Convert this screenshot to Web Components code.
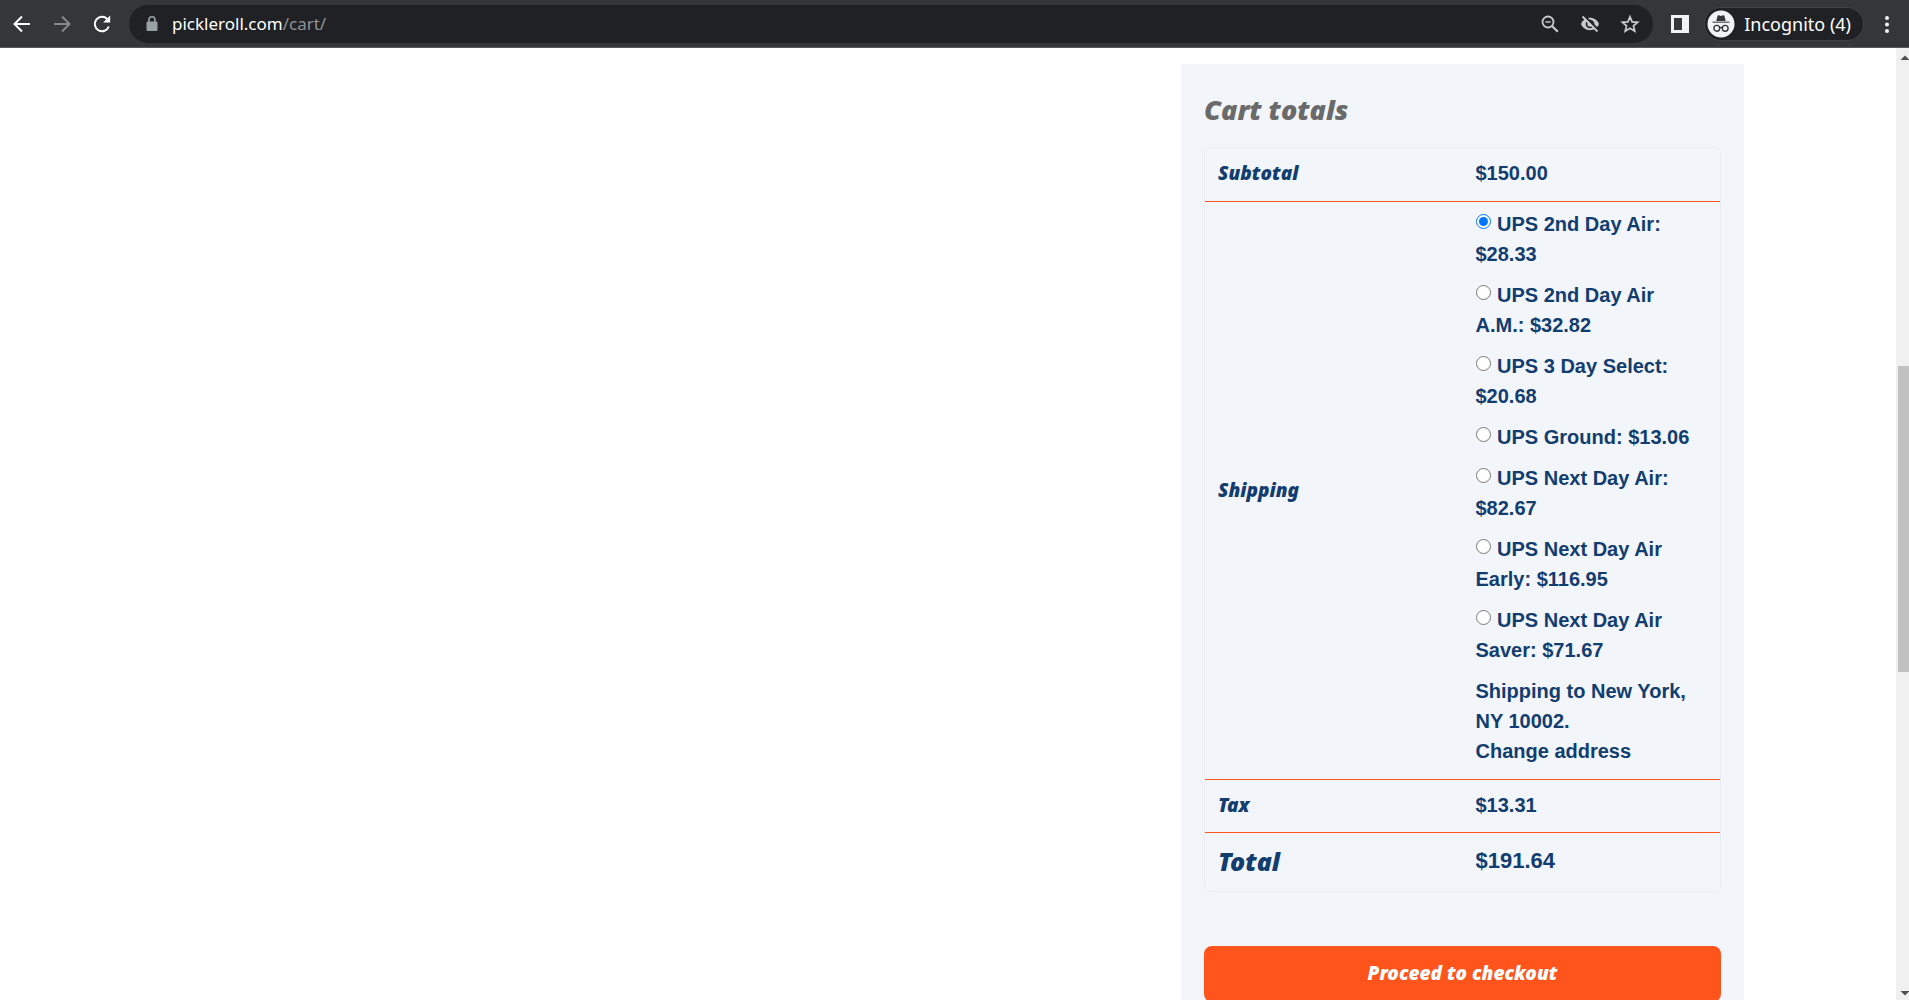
<!DOCTYPE html>
<html lang="en">
<head>
<meta charset="utf-8">
<title>Cart</title>
<style>
html,body{margin:0;height:100%;background:#fff}
body{overflow:hidden}
</style>
</head>
<body>
<browser-window>
  <browser-toolbar slot="toolbar"></browser-toolbar>
  <cart-totals></cart-totals>
</browser-window>
<script>
const define = (name, html, setup) => customElements.define(name, class extends HTMLElement {
  constructor() {
    super();
    this.attachShadow({ mode: 'open' }).innerHTML = html;
    if (setup) setup(this);
  }
});

define('browser-window', `
<style>
:host{display:flex;flex-direction:column;height:100vh}
.view{flex:1;display:flex;min-height:0}
main{flex:1;min-width:0;overflow:hidden}
.container{max-width:1592px;margin:0 auto;padding-top:16px;display:flex;justify-content:flex-end}
</style>
<slot name="toolbar"></slot>
<div class="view">
  <main><div class="container"><slot></slot></div></main>
  <page-scrollbar></page-scrollbar>
</div>`);

define('page-scrollbar', `
<style>
:host{display:flex;flex-direction:column;width:13px;background:#f0f0f0;overflow:hidden}
svg{display:block;flex:none;width:13px;height:18px}
.track{flex:1;display:flex;flex-direction:column;padding-left:2px}
.before{flex:300}.thumb{flex:306;background:#c1c1c1}.after{flex:310}
</style>
<svg viewBox="0 0 13 18"><path d="M9 7.500l4.500 4.500h-9z" fill="#505050"/></svg>
<div class="track"><div class="before"></div><div class="thumb"></div><div class="after"></div></div>
<svg viewBox="0 0 13 18"><path d="M4.500 9h9L9 13.500z" fill="#505050"/></svg>`);

define('browser-toolbar', `
<style>
:host{display:flex;align-items:center;box-sizing:border-box;height:48px;padding:0 12px;background:#35363a;border-bottom:1px solid #56575b;font:17px/24px "Noto Sans",sans-serif;color:#fff}
button{display:flex;align-items:center;justify-content:center;padding:0;border:0;background:none;color:inherit;font:inherit}
svg{display:block;width:20px;height:20px}
.nav{display:flex;gap:20px;margin-right:17px}
.dim{color:#88898c}
.bar{flex:1;display:flex;align-items:center;height:38px;box-sizing:border-box;padding:0 13px;border-radius:19px;background:#202124}
.lock{width:20px;height:20px;color:#9aa0a6;margin-right:10px}
.url{flex:1}.url span{color:#8f9194}
.tools{display:flex;gap:20px;color:#c7c9cc}
.side{margin:0 14px 0 17px}
.chip{height:34px;box-sizing:border-box;padding:0 12px 0 2px;gap:9px;border:1px solid #404145;border-radius:17px;background:#202124;font-size:18px}
.chip svg{width:28px;height:28px}
.more{margin-left:13px}
</style>
<div class="nav">
<button aria-label="Back"><svg viewBox="0 0 20 20" fill="none" stroke="currentColor" stroke-width="2"><path d="M18 10H2.500M10 2.500L2.500 10l7.500 7.500"/></svg></button>
<button class="dim" aria-label="Forward"><svg viewBox="0 0 20 20" fill="none" stroke="currentColor" stroke-width="2"><path d="M2 10h15.500M10 2.500l7.500 7.500-7.500 7.500"/></svg></button>
<button aria-label="Reload"><svg viewBox="0 0 20 20"><path d="M16.800 12.500A7.200 7.200 0 1 1 15.200 5" fill="none" stroke="currentColor" stroke-width="2"/><path d="M18.200 1.500v7h-7z" fill="currentColor"/></svg></button>
</div>
<div class="bar">
<svg class="lock" viewBox="0 0 20 20"><rect x="4.500" y="7.500" width="11" height="9.500" rx="1.300" fill="currentColor"/><path d="M7 8V5.800a3 3 0 0 1 6 0V8" fill="none" stroke="currentColor" stroke-width="1.600"/></svg>
<div class="url">pickleroll.com<span>/cart/</span></div>
<div class="tools">
<button aria-label="Zoom"><svg viewBox="0 0 20 20" fill="none" stroke="currentColor" stroke-width="1.800"><circle cx="8" cy="8" r="5.500"/><path d="M5.500 8h5" stroke-width="1.500"/><path d="M12 12l5.800 5.800" stroke-width="2.200"/></svg></button>
<button aria-label="Third-party cookies blocked"><svg viewBox="0 0 20 20"><path d="M1 10c1.700-4 5-6.200 9-6.200s7.300 2.200 9 6.200c-1.700 4-5 6.200-9 6.200S2.700 14 1 10z" fill="currentColor"/><circle cx="10" cy="10" r="3.500" fill="none" stroke="#202124" stroke-width="1.700"/><path d="M4 1.500l15 15" stroke="#202124" stroke-width="2.200"/><path d="M2.500 2.500l15 15" stroke="currentColor" stroke-width="1.800"/></svg></button>
<button aria-label="Bookmark"><svg viewBox="0 0 20 20"><path d="M10 2.800l2.150 5 5.450.45-4.100 3.600 1.250 5.350L10 14.350 5.250 17.200l1.250-5.350-4.100-3.600 5.450-.45z" fill="none" stroke="currentColor" stroke-width="1.800"/></svg></button>
</div>
</div>
<button class="side" aria-label="Side panel"><svg viewBox="0 0 20 20"><path d="M1 1h18v18H1zM4 4v12h8V4z" fill="#f1f3f4" fill-rule="evenodd"/></svg></button>
<button class="chip"><svg viewBox="0 0 28 28"><circle cx="14" cy="14" r="13.500" fill="#f1f3f4"/><path d="M9.300 11l1.300-5.200q.3-.8 1.200-.5l2.200.6 2.200-.6q.9-.3 1.200.5L18.700 11z" fill="#35363a"/><path d="M5.500 11.500h17v1.500h-17z" fill="#6c6e72"/><g fill="none" stroke="#35363a" stroke-width="1.400"><circle cx="9.800" cy="18.300" r="2.900"/><circle cx="18.200" cy="18.300" r="2.900"/><path d="M12.600 17.800q1.400-.8 2.800 0"/></g></svg>Incognito (4)</button>
<button class="more" aria-label="Menu"><svg viewBox="0 0 20 20" fill="#f1f3f4"><circle cx="10" cy="4" r="2"/><circle cx="10" cy="10.500" r="2"/><circle cx="10" cy="17" r="2"/></svg></button>`);

define('shipping-options', `
<style>
:host{display:block}
ul{list-style:none;margin:0;padding:0}
li{margin-bottom:11px}
input{width:15px;height:15px;margin:0 1px 0 0;vertical-align:2px}
p{margin:0}
a{color:inherit;text-decoration:none}
</style>
<ul></ul>
<p>Shipping to New York, NY 10002.</p>
<a href="#address">Change address</a>`, el => {
  const list = el.shadowRoot.querySelector('ul');
  [['UPS 2nd Day Air', '$28.33'], ['UPS 2nd Day Air A.M.', '$32.82'], ['UPS 3 Day Select', '$20.68'],
   ['UPS Ground', '$13.06'], ['UPS Next Day Air', '$82.67'], ['UPS Next Day Air Early', '$116.95'],
   ['UPS Next Day Air Saver', '$71.67']].forEach(([name, price], i) => {
    const li = document.createElement('li');
    li.innerHTML = `<input type="radio" name="shipping" id="rate${i}"${i ? '' : ' checked'}> <label for="rate${i}">${name}: ${price}</label>`;
    list.append(li);
  });
});

define('cart-totals', `
<style>
:host{display:block;box-sizing:border-box;width:563px;padding:29px 23px 40px;background:#f2f5fa;color:#123d6e;font:bold 20px/30px "Liberation Sans",sans-serif}
h2{margin:0 0 20px;color:#6a6a6a;font:italic 900 27px/34px "Noto Sans",sans-serif}
table{width:100%;table-layout:fixed;border:1px solid #eaedf0;border-radius:6px;border-collapse:separate;border-spacing:0}
th,td{padding:10px 13px 12px;text-align:left;vertical-align:middle;border-bottom:1px solid #ff541b}
th{font:italic 900 19px/30px "Noto Sans",sans-serif}
.sub>*{padding-bottom:13px}
.ship td{padding:7px 13px 13px}
.total>*{border-bottom:0;padding:12px 13px 14px;line-height:32px}
.total th{font-size:25px}.total td{font-size:22px}
button{display:block;width:100%;height:56px;margin-top:54px;padding:0 0 2px;border:0;border-radius:8px;background:#ff541b;color:#fff;font:italic 900 19px/24px "Noto Sans",sans-serif}
</style>
<h2>Cart totals</h2>
<table>
<tr class="sub"><th scope="row">Subtotal</th><td>$150.00</td></tr>
<tr class="ship"><th scope="row">Shipping</th><td><shipping-options></shipping-options></td></tr>
<tr><th scope="row">Tax</th><td>$13.31</td></tr>
<tr class="total"><th scope="row">Total</th><td>$191.64</td></tr>
</table>
<button>Proceed to checkout</button>`);
</script>
</body>
</html>
